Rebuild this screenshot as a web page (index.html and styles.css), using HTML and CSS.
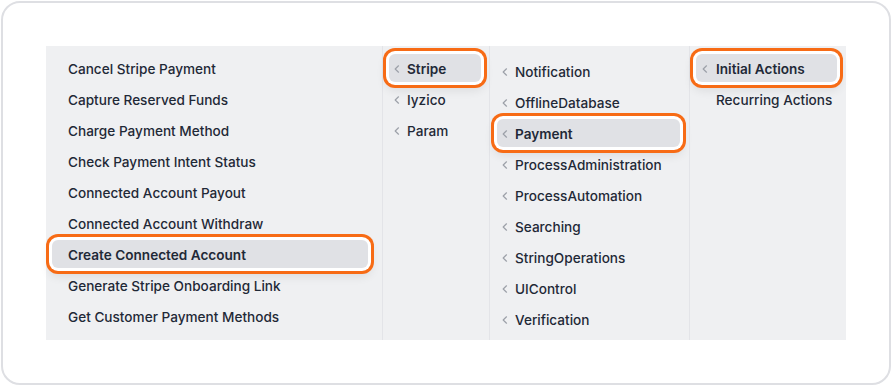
FILE: index.html
```html
<!DOCTYPE html>
<html>
<head>
<meta charset="utf-8">
<link rel="stylesheet" href="styles.css">
</head>
<body>
<div class="card">
  <div class="menu">
    <div class="col col1">
      <div class="item">Cancel Stripe Payment</div>
      <div class="item">Capture Reserved Funds</div>
      <div class="item">Charge Payment Method</div>
      <div class="item">Check Payment Intent Status</div>
      <div class="item">Connected Account Payout</div>
      <div class="item">Connected Account Withdraw</div>
      <div class="item active">Create Connected Account</div>
      <div class="item">Generate Stripe Onboarding Link</div>
      <div class="item">Get Customer Payment Methods</div>
    </div>
    <div class="col col2">
      <div class="item sub active"><svg class="chev" viewBox="0 0 6 8"><polyline points="4.5,0.8 1.2,4 4.5,7.2"/></svg><span>Stripe</span></div>
      <div class="item sub"><svg class="chev" viewBox="0 0 6 8"><polyline points="4.5,0.8 1.2,4 4.5,7.2"/></svg><span>Iyzico</span></div>
      <div class="item sub"><svg class="chev" viewBox="0 0 6 8"><polyline points="4.5,0.8 1.2,4 4.5,7.2"/></svg><span>Param</span></div>
    </div>
    <div class="col col3">
      <div class="item sub"><svg class="chev" viewBox="0 0 6 8"><polyline points="4.5,0.8 1.2,4 4.5,7.2"/></svg><span>Notification</span></div>
      <div class="item sub"><svg class="chev" viewBox="0 0 6 8"><polyline points="4.5,0.8 1.2,4 4.5,7.2"/></svg><span>OfflineDatabase</span></div>
      <div class="item sub active"><svg class="chev" viewBox="0 0 6 8"><polyline points="4.5,0.8 1.2,4 4.5,7.2"/></svg><span>Payment</span></div>
      <div class="item sub"><svg class="chev" viewBox="0 0 6 8"><polyline points="4.5,0.8 1.2,4 4.5,7.2"/></svg><span>ProcessAdministration</span></div>
      <div class="item sub"><svg class="chev" viewBox="0 0 6 8"><polyline points="4.5,0.8 1.2,4 4.5,7.2"/></svg><span>ProcessAutomation</span></div>
      <div class="item sub"><svg class="chev" viewBox="0 0 6 8"><polyline points="4.5,0.8 1.2,4 4.5,7.2"/></svg><span>Searching</span></div>
      <div class="item sub"><svg class="chev" viewBox="0 0 6 8"><polyline points="4.5,0.8 1.2,4 4.5,7.2"/></svg><span>StringOperations</span></div>
      <div class="item sub"><svg class="chev" viewBox="0 0 6 8"><polyline points="4.5,0.8 1.2,4 4.5,7.2"/></svg><span>UIControl</span></div>
      <div class="item sub"><svg class="chev" viewBox="0 0 6 8"><polyline points="4.5,0.8 1.2,4 4.5,7.2"/></svg><span>Verification</span></div>
    </div>
    <div class="col col4">
      <div class="item sub active"><svg class="chev" viewBox="0 0 6 8"><polyline points="4.5,0.8 1.2,4 4.5,7.2"/></svg><span>Initial Actions</span></div>
      <div class="item sub"><span class="chev-space"></span><span>Recurring Actions</span></div>
    </div>
  </div>
</div>
</body>
</html>
```
FILE: styles.css
```css
* { box-sizing: border-box; }
html, body { margin: 0; padding: 0; background: #ffffff; }
body {
  font-family: Inter, "Noto Sans", sans-serif;
  width: 892px;
  height: 386px;
  overflow: hidden;
}
.card {
  margin: 1px;
  width: 890px;
  height: 384px;
  border: 2px solid #dedfe3;
  border-radius: 19px;
  padding: 43px;
  background: #ffffff;
}
.menu {
  display: grid;
  grid-template-columns: 336px 107px 200px 157px;
  height: 294px;
  background: #eff0f2;
}
.col {
  display: flex;
  flex-direction: column;
  gap: 3px;
  padding-top: 8px;
}
.col1 { padding-left: 6px; padding-right: 14px; }
.col2 { border-left: 1px solid #e3e4e8; padding-left: 6px; padding-right: 8px; }
.col3 { border-left: 1px solid #e3e4e8; padding-left: 7px; padding-right: 9px; padding-top: 11px; }
.col4 { border-left: 1px solid #e3e4e8; padding-left: 6px; padding-right: 9px; }
.item {
  height: 28px;
  line-height: 26px;
  padding-top: 2px;
  border-radius: 6px;
  padding-left: 16px;
  font-size: 13.6px;
  font-weight: 500;
  color: #1f2937;
  white-space: nowrap;
  flex: none;
}
.item.sub {
  display: flex;
  align-items: center;
  padding-left: 5px;
}
.chev {
  width: 6px;
  height: 8px;
  margin-right: 7px;
  flex: none;
  fill: none;
  stroke: #9ca0a8;
  stroke-width: 1.2;
  stroke-linecap: round;
  stroke-linejoin: round;
}
.col4 .chev, .col4 .chev-space { margin-left: 1px; margin-right: 8px; }
.chev-space {
  width: 6px;
  margin-right: 7px;
  flex: none;
}
.item.active {
  background: #e0e1e5;
  font-weight: 600;
  box-shadow: 0 0 0 3px #ffffff, 0 0 0 6px #f76b15, 0 5px 10px 4px rgba(0, 0, 0, 0.08);
}
```
